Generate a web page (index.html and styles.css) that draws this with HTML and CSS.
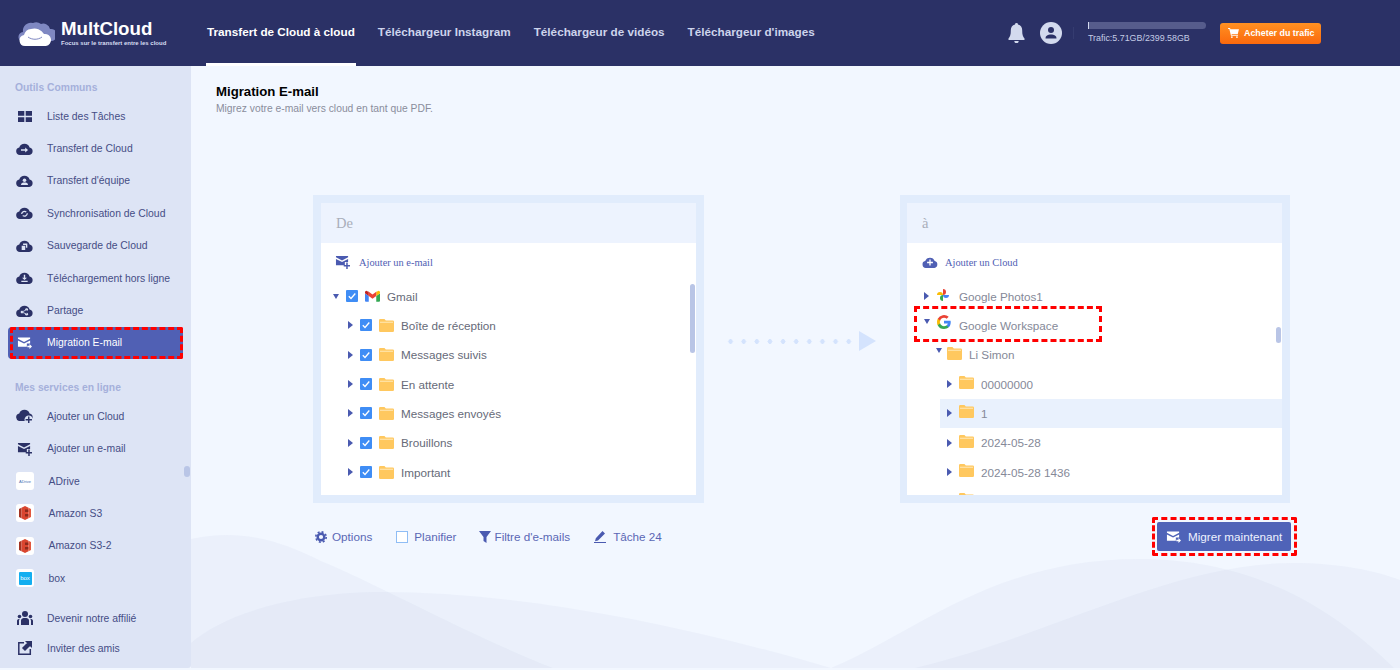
FILE: index.html
```html
<!DOCTYPE html>
<html lang="fr">
<head>
<meta charset="utf-8">
<title>MultCloud - Migration E-mail</title>
<link rel="stylesheet" href="styles.css">
</head>
<body>
<svg class="defs" width="0" height="0" aria-hidden="true">
  <symbol id="cloud" viewBox="0 0 24 17"><path d="M5.500 17A5.400 5.400 0 0 1 4.600 6.300 7.800 7.800 0 0 1 12 1a7.600 7.600 0 0 1 7.200 5.200A5.500 5.500 0 0 1 18.800 17z"/></symbol>
  <symbol id="mail" viewBox="0 0 16 14"><path d="M1 1h13v1.400L7.500 5.800 1 2.400z"/><path d="M1 4.200l6.500 3.400L14 4.200V7.500h-3.500V11H1z"/><path d="M11 9.800h2.300V8L16 10.700l-2.700 2.700v-1.800H11z"/></symbol>
  <symbol id="mailplus" viewBox="0 0 16 15"><path d="M1 1h13v1.400L7.500 5.800 1 2.400z"/><path d="M1 4.200l6.500 3.400L14 4.200V7.500h-3.500V11H1z"/><path d="M12 8h1.600v2.700H16.300v1.600H13.600V15H12v-2.700H9.300v-1.600H12z"/></symbol>
  <symbol id="folder" viewBox="0 0 15 13"><path fill="#ffc85f" d="M0 1.200A1.200 1.200 0 0 1 1.200 0h4.300l1.300 1.500h7A1.200 1.200 0 0 1 15 2.700v9.100A1.200 1.200 0 0 1 13.800 13H1.200A1.200 1.200 0 0 1 0 11.800z"/><path fill="#fff1cf" d="M1 2.800h13v.8H1z"/></symbol>
  <symbol id="check" viewBox="0 0 12 12"><rect width="12" height="12" rx="1" fill="#3f8df5"/><path d="M2.800 6.200l2.200 2.300 4.300-5" fill="none" stroke="#fff" stroke-width="1.300"/></symbol>
  <symbol id="amazon" viewBox="0 0 12 14"><path fill="#a33221" d="M0 3l2.500-1.200v10.400L0 11z"/><path fill="#d9452f" d="M2.500 1.800L6 0l3.500 1.800v10.400L6 14l-3.500-1.800z"/><path fill="#8c2a1b" d="M6 3.500h3.500v2.500H6zM6 8h3.500v2.500H6z"/><path fill="#e2583f" d="M9.500 1.800L12 3v8l-2.500 1.200z"/></symbol>
</svg>

<header class="topbar">
  <div class="logo">
    <svg class="logo-mark" viewBox="0 0 37 25"><path fill="#7f88c2" d="M6 21a5 5 0 0 1-1-10A8 8 0 0 1 15 2a8 8 0 0 1 8 1 7 7 0 0 1 9 5 6 6 0 0 1 2 12z"/><path fill="#fff" d="M7 25a5.500 5.500 0 0 1-1-10.900A8 8 0 0 1 13 8a11 11 0 0 1 13 5 6 6 0 0 1 2 12z"/><path fill="none" stroke="#7f88c2" stroke-width="1" d="M10 16c4 3 10 3 14 0"/></svg>
    <div class="logo-text">
      <strong class="logo-name">MultCloud</strong>
      <span class="logo-tag">Focus sur le transfert entre les cloud</span>
    </div>
  </div>
  <nav class="tabs">
    <a class="tab tab-active">Transfert de Cloud à cloud</a>
    <a class="tab">Téléchargeur Instagram</a>
    <a class="tab">Téléchargeur de vidéos</a>
    <a class="tab">Téléchargeur d'images</a>
  </nav>
  <div class="account">
    <svg class="bell" viewBox="0 0 17 20"><path d="M8.500 0a1.500 1.500 0 0 1 1.500 1.600A6 6 0 0 1 14.200 7.500c0 4 .6 6 2.300 8V17H.5v-1.500c1.700-2 2.300-4 2.300-8A6 6 0 0 1 7 1.600 1.500 1.500 0 0 1 8.500 0zM6.300 18h4.400a2.200 2.200 0 0 1-4.400 0z"/></svg>
    <svg class="avatar" viewBox="0 0 22 22"><circle cx="11" cy="11" r="11" fill="#d3daee"/><circle cx="11" cy="8" r="3" fill="#2b3166"/><path fill="#2b3166" d="M5.500 16.500c0-3 2.500-4 5.500-4s5.500 1 5.500 4z"/></svg>
    <span class="divider"></span>
    <div class="traffic">
      <div class="traffic-bar"><span class="traffic-fill"></span></div>
      <span class="traffic-text">Trafic:5.71GB/2399.58GB</span>
    </div>
    <button class="buy">
      <svg class="cart" viewBox="0 0 12 11"><path fill="#fff" d="M0 0h2.200l.4 1.500H12l-1.300 5H3.800l.3 1H11v1H3.200L1.400 1H0z"/><circle cx="4.200" cy="10" r="1" fill="#fff"/><circle cx="9.800" cy="10" r="1" fill="#fff"/></svg>
      Acheter du trafic
    </button>
  </div>
</header>

<div class="app">
  <aside class="sidebar">
    <h3 class="side-title">Outils Communs</h3>
    <a class="side-item"><span class="side-icon"><svg class="ico-grid" viewBox="0 0 14 11"><path d="M0 0h6.300v4.700H0zM7.700 0H14v4.700H7.700zM0 6.300h6.300V11H0zM7.700 6.300H14V11H7.700z"/></svg></span>Liste des Tâches</a>
    <a class="side-item"><span class="side-icon"><svg class="ico" viewBox="0 0 24 17"><use href="#cloud"/><path fill="#dde4f5" d="M7 9h6V6.500l4 3.500-4 3.500V11H7z"/></svg></span>Transfert de Cloud</a>
    <a class="side-item"><span class="side-icon"><svg class="ico" viewBox="0 0 24 17"><use href="#cloud"/><circle cx="12" cy="7.500" r="2.500" fill="#dde4f5"/><path fill="#dde4f5" d="M7 14c0-2.500 2.500-3.300 5-3.300s5 .8 5 3.300z"/></svg></span>Transfert d'équipe</a>
    <a class="side-item"><span class="side-icon"><svg class="ico" viewBox="0 0 24 17"><use href="#cloud"/><path fill="none" stroke="#dde4f5" stroke-width="1.800" d="M8 10a4 4 0 0 1 6.500-3M16 9a4 4 0 0 1-6.500 3"/></svg></span>Synchronisation de Cloud</a>
    <a class="side-item"><span class="side-icon"><svg class="ico" viewBox="0 0 24 17"><use href="#cloud"/><path fill="#dde4f5" d="M10 5h6v6h-2V7h-4zM8 8h5v6H8z"/></svg></span>Sauvegarde de Cloud</a>
    <a class="side-item"><span class="side-icon"><svg class="ico" viewBox="0 0 24 17"><use href="#cloud"/><path fill="#dde4f5" d="M11 4h2v4h2.500L12 11.500 8.500 8H11zM7.500 12.500h9V14h-9z"/></svg></span>Téléchargement hors ligne</a>
    <a class="side-item"><span class="side-icon"><svg class="ico" viewBox="0 0 24 17"><use href="#cloud"/><circle cx="8.500" cy="10" r="2" fill="#dde4f5"/><circle cx="15" cy="6.500" r="2" fill="#dde4f5"/><circle cx="15" cy="13" r="2" fill="#dde4f5"/><path stroke="#dde4f5" stroke-width="1.200" d="M15 6.500L8.500 10 15 13"/></svg></span>Partage</a>
    <a class="side-item side-active"><span class="side-icon"><svg class="ico-mail" viewBox="0 0 16 14"><use href="#mail"/></svg></span>Migration E-mail</a>

    <h3 class="side-title side-title-second">Mes services en ligne</h3>
    <a class="side-item"><span class="side-icon"><svg class="ico-tall" viewBox="0 0 24 21"><use href="#cloud" width="24" height="17"/><circle cx="18" cy="15" r="6" fill="#dde4f5"/><path d="M17 10.500h2V14h3.500v2H19v3.500h-2V16h-3.500v-2H17z"/></svg></span>Ajouter un Cloud</a>
    <a class="side-item"><span class="side-icon"><svg class="ico-mail" viewBox="0 0 16 15"><use href="#mailplus"/></svg></span>Ajouter un e-mail</a>
    <a class="side-item"><span class="badge"><span class="badge-adrive">ADrive</span></span>ADrive</a>
    <a class="side-item"><span class="badge"><svg class="badge-s3" viewBox="0 0 12 14"><use href="#amazon"/></svg></span>Amazon S3</a>
    <a class="side-item"><span class="badge"><svg class="badge-s3" viewBox="0 0 12 14"><use href="#amazon"/></svg></span>Amazon S3-2</a>
    <a class="side-item"><span class="badge"><span class="badge-box">box</span></span>box</a>

    <div class="side-foot">
      <a class="foot-item"><span class="side-icon"><svg class="ico-people" viewBox="0 0 16 14"><circle cx="8" cy="3" r="3"/><circle cx="2.500" cy="5.500" r="1.800"/><circle cx="13.500" cy="5.500" r="1.800"/><path d="M4 14V9.500C4 7.500 6 7 8 7s4 .5 4 2.500V14zM0 14v-4c0-1.500 1-2 2.800-2-.5.500-.8 1-.8 1.800V14zM16 14v-4c0-1.500-1-2-2.800-2 .5.500.8 1 .8 1.800V14z"/></svg></span>Devenir notre affilié</a>
      <a class="foot-item"><span class="side-icon"><svg class="ico-share" viewBox="0 0 14 14"><path fill="none" stroke-width="1.500" d="M6 1.700H.8v11.500h11.500V8"/><path d="M8 0h6v6l-2-2-5 5-2-2 5-5z"/></svg></span>Inviter des amis</a>
    </div>
    <span class="side-scroll"></span>
  </aside>

  <main class="main">
    <svg class="waves" viewBox="0 0 1209 602" preserveAspectRatio="none" aria-hidden="true">
      <path d="M0 473C50 462 90 475 130 495C190 520 280 570 362 602H0z"/>
      <path d="M0 577C30 550 100 526 192 526C320 526 480 555 640 602H0z"/>
      <path d="M640 602C720 570 800 493 948 493C1060 493 1140 540 1203 602z"/>
      <path d="M724 602C860 570 980 497 1102 497C1150 497 1185 505 1209 514V602z"/>
    </svg>
    <div class="heading">
      <h1 class="title">Migration E-mail</h1>
      <p class="subtitle">Migrez votre e-mail vers cloud en tant que PDF.</p>
    </div>

    <div class="panels">
      <section class="panel">
        <div class="panel-head">De</div>
        <div class="panel-add"><svg class="add-mail" viewBox="0 0 16 15"><use href="#mailplus"/></svg>Ajouter un e-mail</div>
        <div class="tree">
          <div class="row lvl-a"><i class="caret caret-down"></i><svg class="cb"><use href="#check"/></svg><svg class="gmail" viewBox="0 0 16 12"><path fill="#4285f4" d="M1 12h3V6L0 3v8a1 1 0 0 0 1 1"/><path fill="#34a853" d="M12 12h3a1 1 0 0 0 1-1V3l-4 3z"/><path fill="#fbbc04" d="M12 1.500V6l4-3V2a1.500 1.500 0 0 0-2.400-1.200z"/><path fill="#ea4335" d="M4 6V1.500L8 4.500l4-3V6L8 9z"/><path fill="#c5221f" d="M0 2v1l4 3V1.500L2.400.8A1.500 1.500 0 0 0 0 2z"/></svg><span class="label">Gmail</span></div>
          <div class="row lvl-b"><i class="caret"></i><svg class="cb"><use href="#check"/></svg><svg class="fold"><use href="#folder"/></svg><span class="label">Boîte de réception</span></div>
          <div class="row lvl-b"><i class="caret"></i><svg class="cb"><use href="#check"/></svg><svg class="fold"><use href="#folder"/></svg><span class="label">Messages suivis</span></div>
          <div class="row lvl-b"><i class="caret"></i><svg class="cb"><use href="#check"/></svg><svg class="fold"><use href="#folder"/></svg><span class="label">En attente</span></div>
          <div class="row lvl-b"><i class="caret"></i><svg class="cb"><use href="#check"/></svg><svg class="fold"><use href="#folder"/></svg><span class="label">Messages envoyés</span></div>
          <div class="row lvl-b"><i class="caret"></i><svg class="cb"><use href="#check"/></svg><svg class="fold"><use href="#folder"/></svg><span class="label">Brouillons</span></div>
          <div class="row lvl-b"><i class="caret"></i><svg class="cb"><use href="#check"/></svg><svg class="fold"><use href="#folder"/></svg><span class="label">Important</span></div>
        </div>
        <span class="scroll scroll-left"></span>
      </section>

      <div class="flow-arrow"><span class="dots"></span><i class="arrow-head"></i></div>

      <section class="panel panel-right">
        <div class="panel-head">à</div>
        <div class="panel-add panel-add-cloud"><svg class="add-cloud" viewBox="0 0 24 17"><use href="#cloud"/><path fill="#fff" d="M11 4h2v3.500h3.500v2H13V13h-2V9.500H7.500v-2H11z"/></svg>Ajouter un Cloud</div>
        <div class="tree">
          <div class="row lvl-c"><i class="caret"></i><svg class="photos" viewBox="0 0 12 12"><path fill="#fbbc04" d="M0 6a3 3 0 0 1 6 0z"/><path fill="#ea4335" d="M6 0a3 3 0 0 1 0 6z"/><path fill="#4285f4" d="M12 6a3 3 0 0 1-6 0z"/><path fill="#34a853" d="M6 12a3 3 0 0 1 0-6z"/></svg><span class="label label-grey">Google Photos1</span></div>
          <div class="row lvl-c mark-row"><i class="caret caret-down caret-raised"></i><svg class="g-logo" viewBox="0 0 18 18"><path fill="#4285f4" d="M17.640 9.200c0-.64-.06-1.250-.16-1.840H9v3.480h4.840a4.140 4.140 0 0 1-1.800 2.720v2.260h2.920c1.700-1.570 2.680-3.880 2.680-6.620z"/><path fill="#34a853" d="M9 18c2.430 0 4.470-.8 5.960-2.180l-2.920-2.260c-.8.540-1.830.86-3.040.86-2.340 0-4.320-1.580-5.030-3.700H.96v2.330A9 9 0 0 0 9 18z"/><path fill="#fbbc05" d="M3.970 10.720A5.400 5.400 0 0 1 3.680 9c0-.6.100-1.180.29-1.720V4.950H.96A9 9 0 0 0 0 9c0 1.450.35 2.830.96 4.050z"/><path fill="#ea4335" d="M9 3.580c1.320 0 2.500.45 3.440 1.350l2.580-2.580A9 9 0 0 0 .96 4.950l3.010 2.330C4.680 5.160 6.660 3.580 9 3.580z"/></svg><span class="label label-grey">Google Workspace</span></div>
          <div class="row lvl-d"><i class="caret caret-down caret-raised"></i><svg class="fold fold-raised"><use href="#folder"/></svg><span class="label label-grey">Li Simon</span></div>
          <div class="row lvl-e"><i class="caret"></i><svg class="fold fold-raised"><use href="#folder"/></svg><span class="label label-grey">00000000</span></div>
          <div class="row lvl-e row-selected"><i class="caret"></i><svg class="fold fold-raised"><use href="#folder"/></svg><span class="label label-grey">1</span></div>
          <div class="row lvl-e"><i class="caret"></i><svg class="fold fold-raised"><use href="#folder"/></svg><span class="label label-grey">2024-05-28</span></div>
          <div class="row lvl-e"><i class="caret"></i><svg class="fold fold-raised"><use href="#folder"/></svg><span class="label label-grey">2024-05-28 1436</span></div>
          <div class="row lvl-e"><i class="caret"></i><svg class="fold fold-raised"><use href="#folder"/></svg></div>
        </div>
        <span class="scroll scroll-right"></span>
      </section>
    </div>

    <div class="actions">
      <a class="act act-options"><svg class="gear" viewBox="0 0 12 12"><circle cx="6" cy="6" r="3.300" fill="none" stroke-width="2.400"/><circle cx="6" cy="6" r="5.200" fill="none" stroke-width="1.600" stroke-dasharray="2 2.080"/></svg>Options</a>
      <a class="act act-plan"><span class="plan-box"></span>Planifier</a>
      <a class="act act-filter"><svg class="filter" viewBox="0 0 12 12"><path d="M0 0h12L7.500 6v6L4.500 10V6z"/></svg>Filtre d'e-mails</a>
      <a class="act act-task"><svg class="pen" viewBox="0 0 12 12"><path d="M8.500 0L11 2.500 4 9.500 1 10.300l.8-3zM0 11h12v1H0z"/></svg>Tâche 24</a>
      <button class="migrate"><svg class="migrate-ico" viewBox="0 0 16 14"><use href="#mail"/></svg>Migrer maintenant</button>
    </div>
  </main>
</div>
</body>
</html>
```

FILE: styles.css
```css
*, *::before, *::after { box-sizing: border-box; }
html, body { margin: 0; padding: 0; height: 100%; overflow: hidden; }
body { background: #f2f7ff; font-family: "Liberation Sans", Arial, sans-serif; font-size: 10.400px; color: #454d85; }
a { color: inherit; text-decoration: none; }
.defs { position: absolute; }

/* top bar */
.topbar { height: 66px; background: #2b3166; display: flex; align-items: stretch; padding-left: 18px; }
.logo { display: flex; align-items: center; gap: 6px; width: 188px; flex: none; }
.logo-mark { width: 37px; height: 25px; flex: none; }
.logo-text { display: flex; flex-direction: column; color: #fff; }
.logo-name { font-size: 18.700px; line-height: 20px; font-weight: 700; }
.logo-tag { font-size: 6px; line-height: 8px; color: #d8def2; font-weight: 700; white-space: nowrap; }
.tabs { display: flex; gap: 21px; }
.tab { display: flex; align-items: center; padding: 0 1px; font-size: 11.720px; font-weight: 700; color: #cdd4ec; border-bottom: 3px solid transparent; white-space: nowrap; }
.tab-active { color: #fff; border-bottom-color: #fff; }
.account { margin-left: auto; padding-right: 79px; display: flex; align-items: center; }
.bell { width: 17px; height: 20px; fill: #d3daee; flex: none; }
.avatar { width: 22px; height: 22px; margin-left: 15px; flex: none; }
.divider { width: 1px; height: 12px; background: #353c70; margin-left: 11px; }
.traffic { margin-left: 14px; width: 118px; display: flex; flex-direction: column; gap: 3px; }
.traffic-bar { height: 7px; background: #565c8c; border-radius: 0 4px 4px 0; }
.traffic-fill { display: block; width: 1px; height: 7px; background: #d3daee; }
.traffic-text { font-size: 8.900px; line-height: 13px; color: #c4cce5; white-space: nowrap; }
.buy { margin-left: 14px; width: 101px; height: 21px; padding: 0 0 0 8px; border: 0; border-radius: 3px; background: linear-gradient(#ff9122, #fb690d); color: #fff; font: 700 8.900px "Liberation Sans", Arial, sans-serif; display: flex; align-items: center; gap: 5px; white-space: nowrap; }
.cart { width: 11px; height: 10px; flex: none; }

/* layout */
.app { display: flex; height: 602px; }
.sidebar { position: relative; width: 191px; flex: none; background: #dde4f5; padding-top: 11px; border-bottom-right-radius: 3px; }
.side-title { margin: 0; height: 23px; padding-left: 15px; font-size: 10.300px; line-height: 21px; font-weight: 700; color: #a5b0db; }
.side-title-second { margin-top: 18px; height: 23px; }
.side-item { position: relative; display: flex; align-items: center; height: 32.400px; margin: 0 8px; padding-left: 8px; white-space: nowrap; }
.side-icon { width: 17px; margin-right: 14px; flex: none; display: flex; align-items: center; justify-content: center; }
.side-icon svg { fill: #2b3166; stroke: #2b3166; stroke-width: 0; }
.ico { width: 17px; height: 12px; }
.ico-grid { width: 14px; height: 11px; }
.ico-mail { width: 15px; height: 14px; }
.ico-tall { width: 17px; height: 15px; }
.ico-people { width: 16px; height: 14px; }
.ico-share { width: 14px; height: 14px; stroke-width: 1.500 !important; }
.side-active { background: #5060b4; color: #fff; border-radius: 4px; }
.side-active::after { content: ""; position: absolute; inset: 0 0 0 2px; border: 3px dashed #f00; border-radius: 2px; }
.side-active .side-icon svg { fill: #fff; }
.badge { width: 18px; height: 18px; margin-right: 14.500px; flex: none; background: #fff; border-radius: 3px; display: flex; align-items: center; justify-content: center; }
.badge-adrive { font-size: 4px; color: #4a6fb3; }
.badge-s3 { width: 12px; height: 14px; }
.badge-box { width: 13px; height: 13px; background: #13aef0; color: #fff; font-size: 6px; line-height: 13px; text-align: center; border-radius: 1px; }
.side-foot { margin-top: 9px; }
.foot-item { display: flex; align-items: center; height: 30px; padding-left: 16px; white-space: nowrap; }
.side-scroll { position: absolute; right: 1px; top: 400px; width: 6px; height: 11px; border-radius: 3px; background: #b9c5e6; }

/* main */
.main { position: relative; flex: 1; padding: 17px 0 0 25px; overflow: hidden; }
.waves { position: absolute; left: 0; top: 0; width: 100%; height: 100%; fill: #acbbd7; fill-opacity: .1; }
.heading { position: relative; }
.title { margin: 0; font-size: 13.200px; line-height: 18px; color: #000; font-weight: 700; }
.subtitle { margin: 0 0 0; font-size: 10.300px; line-height: 16px; color: #8a8d9c; }
.panels { position: relative; display: flex; margin: 78px 0 0 97px; }
.panel { position: relative; width: 391px; height: 308px; background: #fff; border: 8px solid #e1ecfc; flex: none; }
.panel-right { width: 390px; border-left-width: 7px; }
.panel-head { height: 40px; padding-left: 15px; background: #edf3fe; font: 14.500px/40px "Liberation Serif", serif; color: #a9aeba; }
.panel-add { height: 38.400px; display: flex; align-items: center; gap: 9px; padding-left: 14px; font: 10.400px "Liberation Serif", serif; color: #5060b4; }
.panel-add-cloud { gap: 7px; padding-left: 15px; }
.add-mail { width: 15px; height: 14px; fill: #4a5ab0; }
.add-cloud { width: 16px; height: 11px; fill: #5060b4; }
.tree { height: 213.600px; overflow: hidden; }
.row { display: flex; align-items: center; height: 29.330px; font-size: 11.700px; }
.lvl-a { padding-left: 12px; }
.lvl-b { padding-left: 27px; }
.lvl-c { padding-left: 17px; }
.lvl-d { padding-left: 29px; }
.lvl-e { padding-left: 40px; }
.row-selected { margin-left: 33px; padding-left: 7px; background: #e9f1fd; }
.caret { width: 0; height: 0; flex: none; border-style: solid; border-color: transparent transparent transparent #4a5ab0; border-width: 4px 0 4px 5px; margin-right: 7px; }
.lvl-c .caret { margin-right: 8px; }
.caret-down { border-color: #4a5ab0 transparent transparent; border-width: 5px 3.500px 0; margin-right: 7px; }
.row .caret-raised { margin-top: -8px; margin-right: 7px; }
.lvl-d .caret-raised { margin-right: 5px; }
.cb { width: 12px; height: 12px; flex: none; margin-right: 7px; }
.fold { width: 15px; height: 13px; flex: none; margin-right: 7px; }
.fold-raised { margin-top: -3px; }
.gmail { width: 15px; height: 12px; flex: none; margin-right: 7px; }
.photos { width: 12px; height: 12px; flex: none; margin: -2px 10px 0 0; }
.g-logo { width: 14px; height: 14px; flex: none; margin: -6px 8px 0 0; }
.label { color: #666a78; white-space: nowrap; }
.label-grey { color: #858998; }
.mark-row { position: relative; }
.mark-row::after { content: ""; position: absolute; left: 7px; top: -5px; width: 188px; height: 36px; border: 3px dashed #f00; }
.scroll { position: absolute; background: #b9c5e6; border-radius: 3px; width: 5px; }
.scroll-left { right: 1px; top: 81px; height: 69px; }
.scroll-right { right: 1px; top: 124px; height: 16px; }
.flow-arrow { width: 196px; flex: none; display: flex; align-items: center; padding: 0 0 16px 20px; gap: 3.600px; }
.dots { width: 131.400px; height: 5px; background: radial-gradient(circle 2.500px, #d4e3fd 90%, transparent) 0 0 / 13.140px 5px repeat-x; }
.arrow-head { width: 0; height: 0; border-style: solid; border-color: transparent transparent transparent #d4e3fd; border-width: 10.500px 0 10.500px 17px; }

/* actions */
.actions { position: relative; display: flex; align-items: center; height: 29px; margin: 19px 0 0 97px; width: 978px; font-size: 11.700px; color: #5a67b5; }
.act { display: flex; align-items: center; white-space: nowrap; }
.act svg { fill: #4a5ab0; stroke: #4a5ab0; stroke-width: 0; }
.act-options { margin-left: 2px; gap: 5px; }
.act-plan { margin-left: 24px; gap: 6px; }
.act-filter { margin-left: 22px; gap: 4px; }
.act-task { margin-left: 24px; gap: 7px; }
.gear { width: 12px; height: 12px; }
.plan-box { width: 12px; height: 12px; border: 1px solid #8fbdf5; background: #fff; }
.filter { width: 12px; height: 12px; }
.pen { width: 12px; height: 12px; }
.migrate { position: relative; margin-left: auto; width: 134px; height: 29px; padding: 0 0 0 9px; border: 0; border-radius: 2px; background: #4f63b8; color: #eef2ff; font: 11.700px "Liberation Sans", Arial, sans-serif; display: flex; align-items: center; gap: 7px; white-space: nowrap; }
.migrate::after { content: ""; position: absolute; inset: -5px -6px -5px -5px; border: 3px dashed #f00; border-radius: 2px; }
.migrate-ico { width: 15px; height: 14px; fill: #fff; }
```
